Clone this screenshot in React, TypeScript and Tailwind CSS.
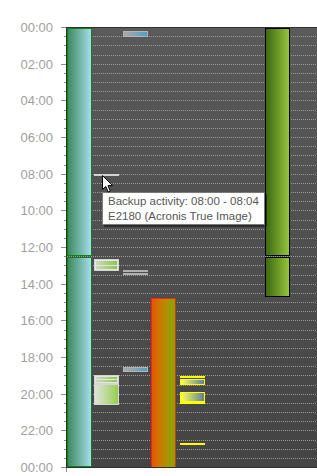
import React from 'react';

type Kind =
  | 'teal'
  | 'olive'
  | 'orange'
  | 'greenBox'
  | 'greenDouble'
  | 'blueBar'
  | 'grayLine'
  | 'whiteLine'
  | 'yellowLine'
  | 'yellowBox'
  | 'yellowBoxBig';

type Item = { from: number; to?: number; h?: number; kind: Kind };

const KIND_CLASS: Record<Kind, string> = {
  teal: 'border border-[#11801a] bg-linear-to-r from-[#3b8b5e] to-[#a6dcee]',
  olive: 'border border-black bg-linear-to-r from-[#3d6a12] to-[#95c53b]',
  orange: 'border border-b-0 border-[#ff1e1e] bg-linear-to-r from-[#e95200] to-[#7ca900]',
  greenBox: 'border border-[#d4d4d4] bg-linear-to-r from-[#dfe2d6] to-[#99cd4a]',
  greenDouble: 'border border-[#d4d4d4] bg-[#e4e4e4] flex flex-col gap-px p-px',
  blueBar: 'border border-[#b4b4b4] bg-linear-to-r from-[#a8a8a8] to-[#47a0c6]',
  grayLine: 'bg-[#b0b0b0]',
  whiteLine: 'bg-[#d2d2d2]',
  yellowLine: 'bg-[#ffff00]',
  yellowBox: 'border border-[#ffff00] bg-linear-to-r from-[#ffff3a] to-[#62808f]',
  yellowBoxBig: 'border border-b-[3px] border-[#ffff00] bg-linear-to-r from-[#ffff3a] to-[#62808f]',
};

// minutes -> px inside the plot (440px per day, origin on the top border)
const y = (m: number) => Math.max(0, Math.round((m * 440) / 1440 - 1));

const COLUMNS: Item[][] = [
  [
    { from: 0, to: 750, kind: 'teal' },
    { from: 753, to: 1440, kind: 'teal' },
  ],
  [
    { from: 480, h: 2, kind: 'whiteLine' },
    { from: 759, to: 798, kind: 'greenDouble' },
    { from: 1139, to: 1168, kind: 'greenDouble' },
    { from: 1168, to: 1237, kind: 'greenBox' },
  ],
  [
    { from: 13, to: 33, kind: 'blueBar' },
    { from: 795, h: 2, kind: 'grayLine' },
    { from: 805, h: 2, kind: 'grayLine' },
    { from: 1113, to: 1129, kind: 'blueBar' },
  ],
  [{ from: 887, to: 1440, kind: 'orange' }],
  [
    { from: 1142, h: 2, kind: 'yellowLine' },
    { from: 1152, to: 1172, kind: 'yellowBox' },
    { from: 1195, to: 1234, kind: 'yellowBoxBig' },
    { from: 1361, h: 2, kind: 'yellowLine' },
  ],
  [],
  [],
  [
    { from: 0, to: 750, kind: 'olive' },
    { from: 753, to: 884, kind: 'olive' },
  ],
  [],
];

const HOURS = Array.from({ length: 13 }, (_, i) => i * 2);
const HALVES = Array.from({ length: 47 }, (_, i) => i + 1);

function Block({ item }: { item: Item }) {
  const top = y(item.from);
  const height = item.h ?? y(item.to ?? item.from) - top;
  return (
    <div className={`absolute left-0 w-[25px] ${KIND_CLASS[item.kind]}`} style={{ top, height }}>
      {item.kind === 'greenDouble' && (
        <>
          <div className="flex-1 bg-linear-to-r from-[#cad9b5] to-[#8fc646]" />
          <div className="flex-1 bg-linear-to-r from-[#cad9b5] to-[#8fc646]" />
        </>
      )}
    </div>
  );
}

export default function App() {
  return (
    <div className="relative w-[317px] h-[476px] overflow-hidden bg-white pt-[27px] font-['Liberation_Sans',Arial,sans-serif]">
      <div className="flex">
        {/* time axis */}
        <div className="relative w-[66px] h-[441px] shrink-0">
          {HALVES.map((i) => (
            <div key={i} className="absolute right-0 w-[2px] h-px bg-[#8a8a8a]" style={{ top: Math.round(i * 9.1667) }} />
          ))}
          {HOURS.map((h) => (
            <div key={h} className="absolute right-0 flex items-center h-px" style={{ top: Math.round(h * 18.333) }}>
              <span className="text-[13px] leading-none text-[#a0a0a0] mr-[8px]">
                {String(h % 24).padStart(2, '0')}:00
              </span>
              <div className="w-[5px] h-px bg-[#8a8a8a]" />
            </div>
          ))}
          <div className="absolute right-[-1px] top-[440px] w-px h-[5px] bg-[#8a8a8a]" />
        </div>

        {/* plot */}
        <div className="relative flex-1 h-[441px] border-y border-l border-[#303030] bg-linear-to-b from-[#5a5a5a] to-[#444444]">
          {HALVES.map((i) => (
            <div
              key={i}
              className="absolute left-0 right-0 border-t border-dotted border-[#9a9a9a]"
              style={{ top: y(i * 30) }}
            />
          ))}
          <div className="relative grid grid-cols-[27px_repeat(8,28.5px)] h-full">
            {COLUMNS.map((col, ci) => (
              <div key={ci} className="relative h-full">
                {col.map((item, ii) => (
                  <Block key={ii} item={item} />
                ))}
              </div>
            ))}
          </div>
        </div>
      </div>

      {/* tooltip */}
      <div className="absolute left-[102px] top-[192px] w-[163px] h-[33px] bg-white border border-[#7a7a7a] shadow-[2px_2px_0_rgba(0,0,0,0.45)] pl-[5px] pt-[1px] text-[11.5px] leading-[15px] text-[#575757] whitespace-nowrap">
        <div>Backup activity: 08:00 - 08:04</div>
        <div>E2180 (Acronis True Image)</div>
      </div>

      {/* mouse cursor */}
      <svg className="absolute left-[102px] top-[175px]" width="12" height="18" viewBox="0 0 12 18">
        <path d="M0.5 0.5 L0.5 14.5 L3.8 11.4 L6.2 17 L8.3 16.1 L6 10.6 L10.5 10.6 Z" fill="white" stroke="black" strokeWidth="1" strokeLinejoin="miter" />
      </svg>
    </div>
  );
}
